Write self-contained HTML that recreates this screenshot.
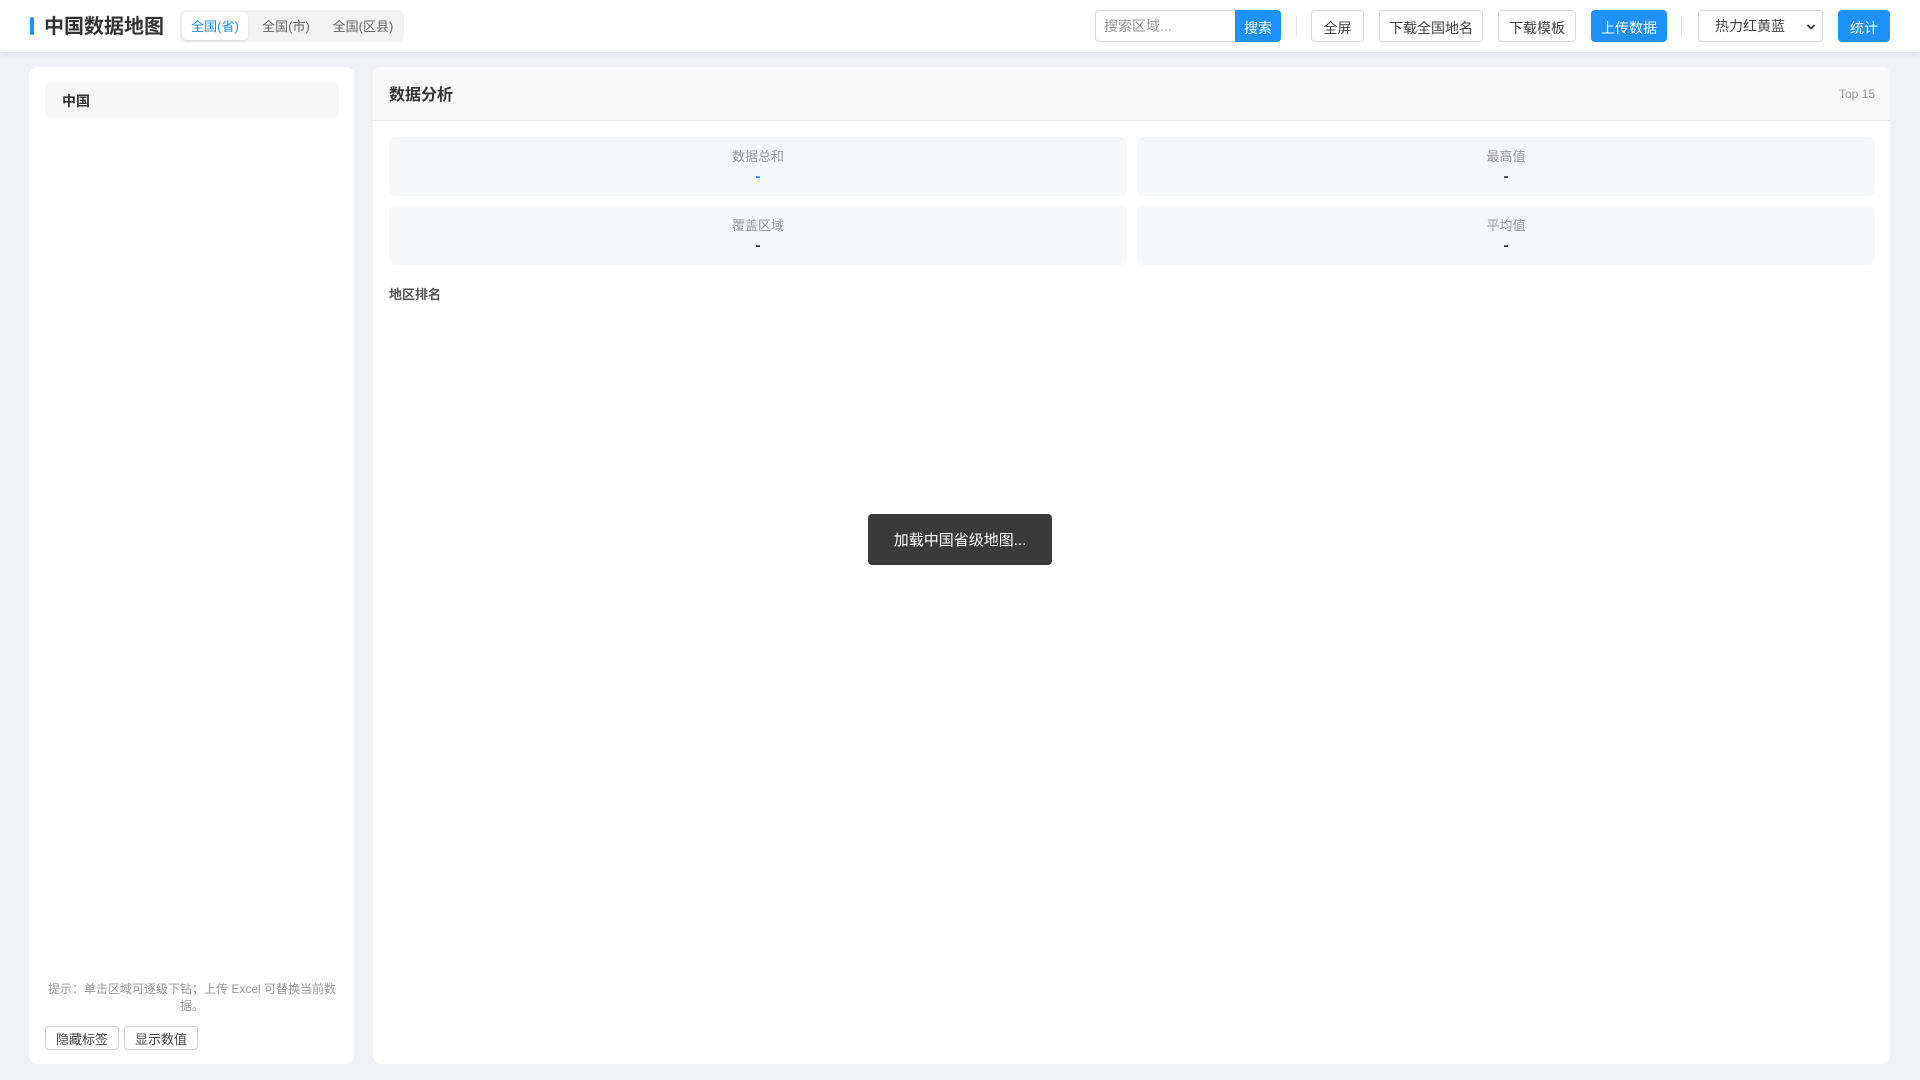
<!DOCTYPE html>
<html><head><meta charset="utf-8"><style>
*{box-sizing:border-box;margin:0;padding:0}
body{width:1920px;height:1080px;background:#f0f2f5;font-family:"Liberation Sans","Noto Sans CJK SC",sans-serif;position:relative;overflow:hidden;color:#333}
.abs{position:absolute}
.hdr{left:0;top:0;width:1920px;height:52px;background:#fff;box-shadow:0 2px 6px rgba(0,0,0,.08)}
.btn{position:absolute;top:10px;height:32px;border:1px solid #d9d9d9;border-radius:4px;background:#fff;font-size:14px;color:#444;display:flex;align-items:center;justify-content:center;padding-top:3px}
.blue{background:#1e90ff;border-color:#1e90ff;color:#fff}
.panel{background:#fff;border-radius:8px}
.card{position:absolute;background:#f7f8fa;border-radius:6px;height:59px;width:738px;text-align:center}
.card .l{font-size:13px;color:#999;margin-top:9px}
.card .v{font-size:15px;font-weight:bold;color:#333;margin-top:3px;line-height:18px}
.sb{position:absolute;top:1026px;height:24px;border:1px solid #d0d0d0;border-radius:4px;font-size:13px;color:#444;display:flex;align-items:center;justify-content:center;background:#fff}
</style></head><body>
<div class="abs hdr">
 <div class="abs" style="left:30px;top:17px;width:4px;height:18px;background:#1e90ff;border-radius:2px"></div>
 <div class="abs" style="left:44px;top:14px;font-size:20px;font-weight:bold;color:#333;line-height:26px">中国数据地图</div>
 <div class="abs" style="left:180px;top:10px;width:224px;height:32px;background:#f3f3f4;border-radius:6px"></div>
 <div class="abs" style="left:182px;top:12px;width:66px;height:28px;background:#fff;border-radius:5px;box-shadow:0 1px 3px rgba(0,0,0,.1);font-size:13px;color:#1e90ff;text-align:center;line-height:30px">全国(省)</div>
 <div class="abs" style="left:252px;top:12px;width:68px;height:28px;font-size:13px;color:#666;text-align:center;line-height:30px">全国(市)</div>
 <div class="abs" style="left:324px;top:12px;width:78px;height:28px;font-size:13px;color:#666;text-align:center;line-height:30px">全国(区县)</div>

 <div class="btn" style="left:1095px;width:142px;border-radius:4px 0 0 4px;justify-content:flex-start;padding-left:8px;padding-top:0;color:#999">搜索区域...</div>
 <div class="btn blue" style="left:1235px;width:46px;border-radius:0 4px 4px 0">搜索</div>
 <div class="abs" style="left:1296px;top:16px;width:1px;height:20px;background:#e5e5e5"></div>
 <div class="btn" style="left:1311px;width:53px">全屏</div>
 <div class="btn" style="left:1379px;width:104px">下载全国地名</div>
 <div class="btn" style="left:1498px;width:78px">下载模板</div>
 <div class="btn blue" style="left:1591px;width:76px">上传数据</div>
 <div class="abs" style="left:1681px;top:16px;width:1px;height:20px;background:#e5e5e5"></div>
 <div class="btn" style="left:1698px;width:125px;justify-content:flex-start;padding-left:16px;padding-top:0">热力红黄蓝<svg style="position:absolute;right:6px;top:12px" width="10" height="8" viewBox="0 0 10 8"><path d="M1.5 2L5 5.5 8.5 2" stroke="#333" stroke-width="1.8" fill="none"/></svg></div>
 <div class="btn blue" style="left:1838px;width:52px">统计</div>
</div>

<div class="abs panel" style="left:29px;top:67px;width:325px;height:997px">
 <div class="abs" style="left:16px;top:15px;width:294px;height:36px;background:#f7f7f8;border-radius:4px;font-size:14px;font-weight:bold;line-height:38px;padding-left:17px">中国</div>
 <div class="abs" style="left:14px;top:914px;width:298px;text-align:center;font-size:12px;color:#999;line-height:17px">提示：单击区域可逐级下钻；上传 Excel 可替换当前数据。</div>
</div>
<div class="sb" style="left:45px;width:74px">隐藏标签</div>
<div class="sb" style="left:124px;width:74px">显示数值</div>

<div class="abs panel" style="left:373px;top:67px;width:1517px;height:997px;overflow:hidden">
 <div class="abs" style="left:0;top:0;width:1517px;height:54px;background:#fafafa;border-bottom:1px solid #ececec"></div>
 <div class="abs" style="left:16px;top:18px;font-size:16px;font-weight:bold;line-height:22px">数据分析</div>
 <div class="abs" style="right:15px;top:20px;font-size:12px;color:#999">Top 15</div>
 <div class="card" style="left:16px;top:70px"><div class="l">数据总和</div><div class="v" style="color:#1e90ff">-</div></div>
 <div class="card" style="left:764px;top:70px"><div class="l">最高值</div><div class="v">-</div></div>
 <div class="card" style="left:16px;top:139px"><div class="l">覆盖区域</div><div class="v">-</div></div>
 <div class="card" style="left:764px;top:139px"><div class="l">平均值</div><div class="v">-</div></div>
 <div class="abs" style="left:16px;top:217px;font-size:13px;font-weight:bold;color:#555">地区排名</div>
</div>
<div class="abs" style="left:868px;top:514px;width:184px;height:51px;background:#3a3a3a;border-radius:4px;color:#fff;font-size:15px;text-align:center;line-height:53px">加载中国省级地图...</div>
</body></html>
